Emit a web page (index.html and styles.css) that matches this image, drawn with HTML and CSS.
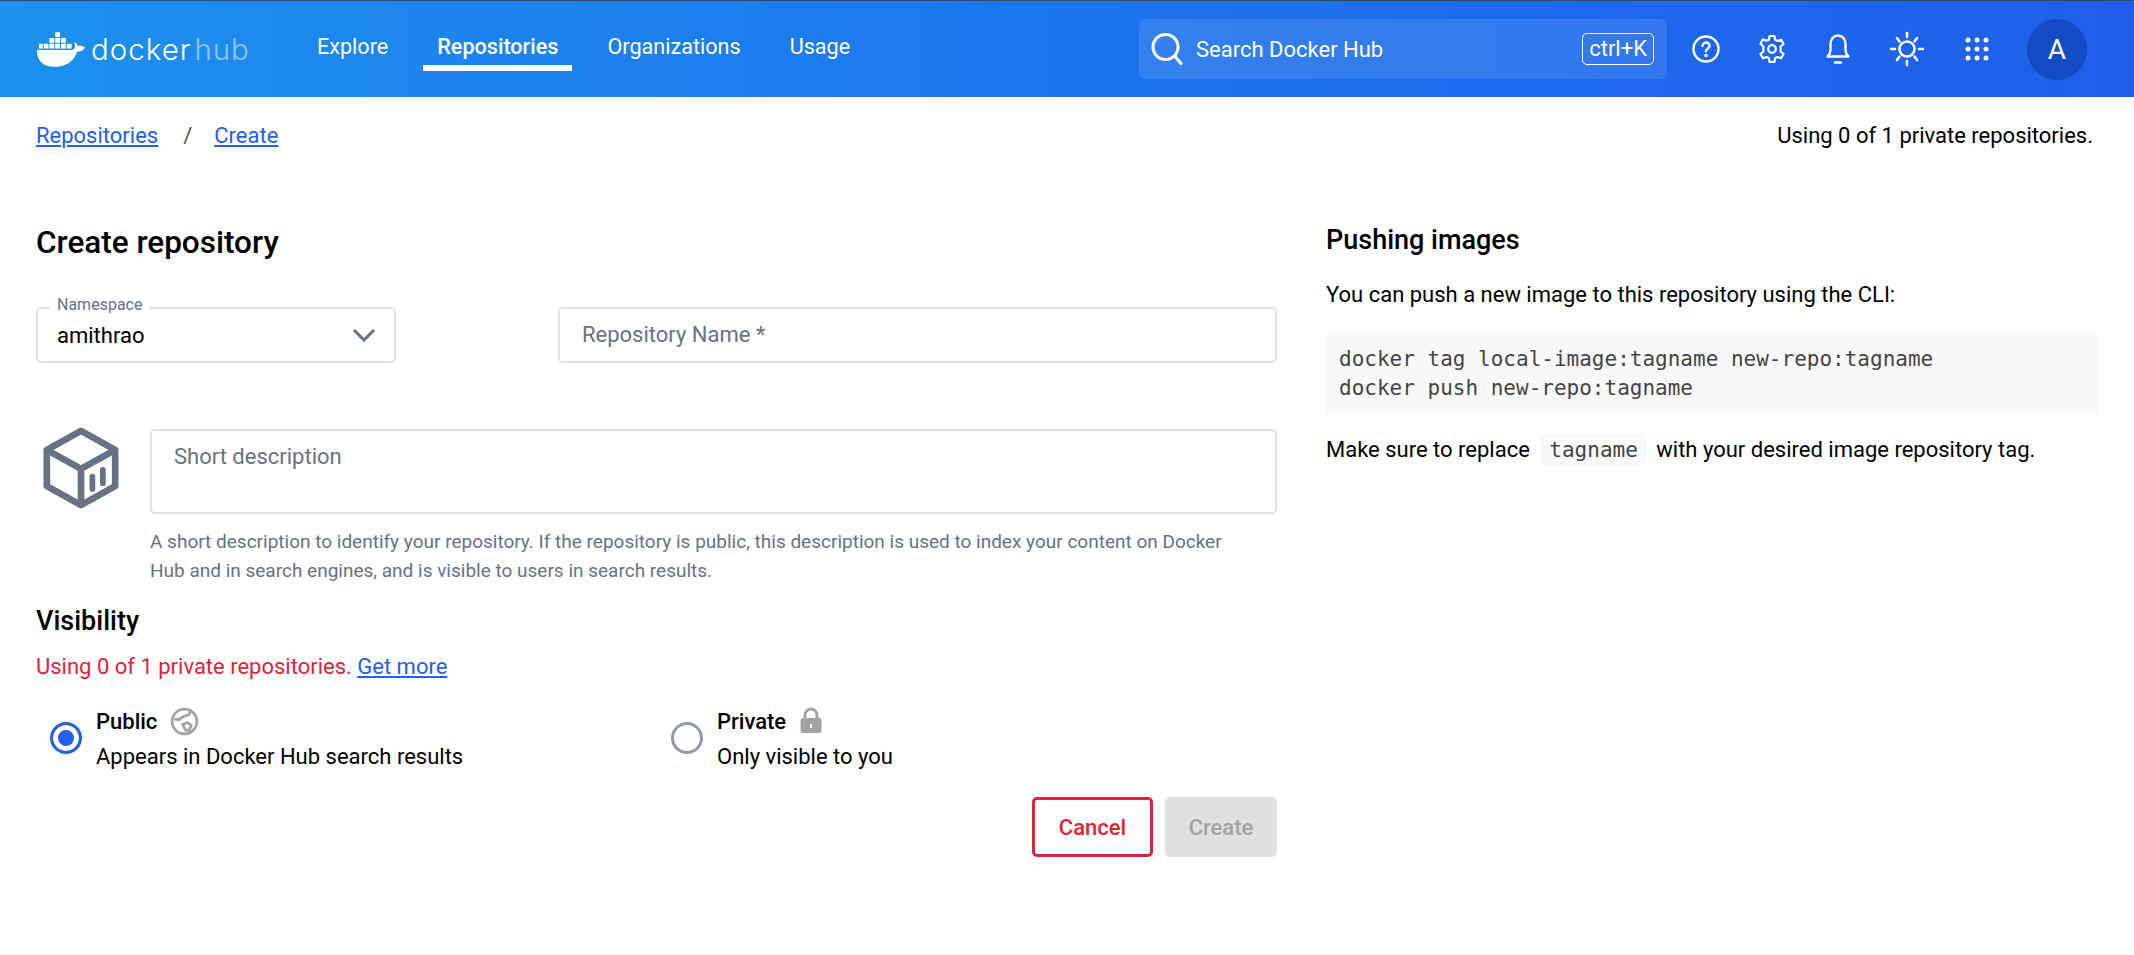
FILE: index.html

```html
<!DOCTYPE html>
<html lang="en">
<head>
  <meta charset="UTF-8">
  <title>Create repository | Docker Hub</title>
  <link rel="stylesheet" href="styles.css">
</head>
<body>
  <header class="topbar">
    <a class="logo">
      <svg class="whale" viewBox="0 0 52 38" width="50" height="37">
        <g fill="#fff">
          <rect x="20" y="1" width="5" height="5"/>
          <rect x="14" y="7" width="5" height="5"/><rect x="20" y="7" width="5" height="5"/><rect x="26" y="7" width="5" height="5"/>
          <rect x="8" y="13" width="5" height="5"/><rect x="14" y="13" width="5" height="5"/><rect x="20" y="13" width="5" height="5"/><rect x="26" y="13" width="5" height="5"/><rect x="32" y="13" width="5" height="5"/>
          <rect x="3" y="13" width="4" height="5"/>
          <path d="M1 19.5h35.5c2.2 0 3.6-1 4-3.4.2-1.800-.2-3.500-1-5 1.800.6 3.300 2 3.900 4.200 2.600-.7 5.500-.2 7.600 1.400-1.700 3.500-5 4.700-8.400 4.800C39.700 31 31 37 19 37 8 37 .6 31 1 19.500z"/>
        </g>
      </svg>
      <span class="wordmark">docker<span class="wordmark-hub">hub</span></span>
    </a>
    <nav class="mainnav">
      <a class="navlink">Explore</a>
      <a class="navlink active">Repositories</a>
      <a class="navlink">Organizations</a>
      <a class="navlink">Usage</a>
    </nav>
    <div class="searchbox">
      <svg class="search-icon" viewBox="0 0 34 34" width="34" height="34" fill="none" stroke="#fff" stroke-width="3" stroke-linecap="round">
        <circle cx="15.500" cy="15" r="12.500"/><path d="M25 24.500l6 7"/>
      </svg>
      <span class="search-text">Search Docker Hub</span>
      <span class="kbd">ctrl+K</span>
    </div>
    <div class="topicons">
      <svg viewBox="0 0 30 30" width="30" height="30" fill="none" stroke="#fff" stroke-width="2.400" stroke-linecap="round">
        <circle cx="15" cy="15" r="12.500"/>
        <path d="M11.500 12c0-2 1.600-3.500 3.500-3.500s3.500 1.400 3.500 3.200c0 2.800-3.500 2.800-3.500 5.600"/>
        <circle cx="15" cy="21.500" r=".6" fill="#fff"/>
      </svg>
      <svg viewBox="0 0 30 30" width="30" height="30" fill="none" stroke="#fff" stroke-width="2.200" stroke-linejoin="round">
        <circle cx="15" cy="15" r="3.800"/>
        <path d="M12.600 2h4.800l.7 3.700 2.400 1.300 3.600-1.300 2.400 4.300-2.900 2.500v5l2.900 2.500-2.400 4.300-3.600-1.300-2.400 1.300-.7 3.700h-4.800l-.7-3.700-2.400-1.300-3.600 1.300-2.400-4.300 2.900-2.500v-5L3.500 9.700l2.400-4.300 3.600 1.300L11.900 5.700z"/>
      </svg>
      <svg viewBox="0 0 30 32" width="30" height="32" fill="none" stroke="#fff" stroke-width="2.400" stroke-linecap="round" stroke-linejoin="round">
        <path d="M4.500 23.500c1.800-1.800 3-3.500 3-6.500v-6c0-4.500 3-8.500 7.500-8.500s7.500 4 7.500 8.500v6c0 3 1.200 4.700 3 6.500z"/>
        <path d="M12 29.500h6"/>
      </svg>
      <svg viewBox="0 0 36 36" width="36" height="36" fill="none" stroke="#fff" stroke-width="2.600" stroke-linecap="round">
        <circle cx="18" cy="18" r="7.500"/>
        <path d="M18 2v4M18 30v4M2 18h4M30 18h4M8 7l2.500 3.500M28 7l-2.500 3.500M8 29l2.500-3.500M28 29l-2.500-3.500"/>
      </svg>
      <svg class="grid-icon" viewBox="0 0 26 26" width="26" height="26" fill="#fff">
        <circle cx="4" cy="4" r="2.500"/><circle cx="13" cy="4" r="2.500"/><circle cx="22" cy="4" r="2.500"/>
        <circle cx="4" cy="13" r="2.500"/><circle cx="13" cy="13" r="2.500"/><circle cx="22" cy="13" r="2.500"/>
        <circle cx="4" cy="22" r="2.500"/><circle cx="13" cy="22" r="2.500"/><circle cx="22" cy="22" r="2.500"/>
      </svg>
    </div>
    <div class="avatar">A</div>
  </header>

  <div class="crumbbar">
    <div class="crumbs">
      <a class="link">Repositories</a>
      <span class="crumb-sep">/</span>
      <a class="link">Create</a>
    </div>
    <span>Using 0 of 1 private repositories.</span>
  </div>

  <main class="page">
    <section class="formcol">
      <h1 class="title">Create repository</h1>

      <div class="row-names">
        <div class="field field-ns">
          <span class="field-label">Namespace</span>
          <span class="field-value">amithrao</span>
          <svg viewBox="0 0 24 14" width="24" height="14" fill="none" stroke="#677285" stroke-width="3">
            <path d="M2 2l10 10L22 2"/>
          </svg>
        </div>
        <div class="field field-name"><span class="placeholder">Repository Name *</span></div>
      </div>

      <div class="row-desc">
        <svg class="repo-icon" viewBox="0 0 80 86" width="76" height="82" fill="none" stroke="#677285" stroke-width="7" stroke-linejoin="round">
          <path d="M40 4l36 20v38L40 82 4 62V24z"/>
          <path d="M4 24l36 20 36-20M40 44v38"/>
          <path d="M52 52v13M63 45v14" stroke-width="6" stroke-linecap="round"/>
        </svg>
        <div class="desc-main">
          <div class="field field-desc"><span class="placeholder">Short description</span></div>
          <p class="helptext">A short description to identify your repository. If the repository is public, this description is used to index your content on Docker Hub and in search engines, and is visible to users in search results.</p>
        </div>
      </div>

      <h2 class="subtitle">Visibility</h2>
      <p class="usage-warn">Using 0 of 1 private repositories. <a class="link">Get more</a></p>

      <div class="radios">
        <div class="radio-item radio-public">
          <span class="radio checked"></span>
          <div>
            <div class="radio-title">Public
              <svg viewBox="0 0 30 30" width="29" height="29" fill="none" stroke="#a3a3a3" stroke-width="2.800" stroke-linejoin="round">
                <circle cx="15" cy="15" r="12.800"/>
                <path d="M4.500 12.500l5 .5 4-3 6-2 2-4"/>
                <path d="M13 18l5-2 4 3-2 5h-4z"/>
              </svg>
            </div>
            <div class="radio-sub">Appears in Docker Hub search results</div>
          </div>
        </div>
        <div class="radio-item">
          <span class="radio"></span>
          <div>
            <div class="radio-title">Private
              <svg viewBox="0 0 24 28" width="24" height="28">
                <path d="M6 12V8a6 6 0 0 1 12 0v4" fill="none" stroke="#a3a3a3" stroke-width="3"/>
                <path fill="#a3a3a3" fill-rule="evenodd" d="M4 11h16a2.500 2.500 0 0 1 2.500 2.500v10A2.500 2.500 0 0 1 20 26H4a2.500 2.500 0 0 1-2.500-2.500v-10A2.500 2.500 0 0 1 4 11zm7 6v4h2v-4z"/>
              </svg>
            </div>
            <div class="radio-sub">Only visible to you</div>
          </div>
        </div>
      </div>

      <div class="actions">
        <button class="btn btn-cancel">Cancel</button>
        <button class="btn btn-create">Create</button>
      </div>
    </section>

    <aside class="helpcol">
      <h2 class="help-title">Pushing images</h2>
      <p class="help-line">You can push a new image to this repository using the CLI:</p>
      <pre class="codeblock">docker tag local-image:tagname new-repo:tagname
docker push new-repo:tagname</pre>
      <p class="help-line help-line-last">Make sure to replace <code class="inline-code">tagname</code> with your desired image repository tag.</p>
    </aside>
  </main>
</body>
</html>
```

FILE: styles.css

```css
* {
  box-sizing: border-box;
}
body {
  margin: 0;
  font-family: Roboto, "Liberation Sans", sans-serif;
  font-size: 22px;
  color: #000;
  background-color: #fff;
}
h1, h2, p {
  margin: 0;
}
.link {
  color: #2560e8;
  text-decoration: underline;
}

/* top bar */
.topbar {
  display: flex;
  align-items: center;
  height: 97px;
  padding-left: 36px;
  border-top: 1px solid #3a4a5e;
  background: linear-gradient(90deg, #1d91ee 0%, #1c72ee 55%, #1f5eea 100%);
  color: #fff;
}
.logo {
  display: flex;
  align-items: center;
  width: 281px;
}
.whale {
  margin-right: 5px;
}
.wordmark {
  font-family: Inter, sans-serif;
  font-weight: 300;
  font-size: 29.5px;
  letter-spacing: 1px;
}
.wordmark-hub {
  margin-left: 3px;
  opacity: 0.5;
}
.mainnav {
  display: flex;
  align-self: flex-start;
  gap: 21px;
  width: 836px;
  margin-left: -14px;
}
.navlink {
  display: flex;
  align-items: center;
  height: 70px;
  padding: 26px 14px 0;
  font-size: 21.6px;
  border-bottom: 6px solid transparent;
}
.navlink.active {
  font-weight: 500;
  border-bottom-color: #fff;
}
.searchbox {
  display: flex;
  align-items: center;
  width: 528px;
  height: 60px;
  padding: 0 13px 0 11px;
  border-radius: 6px;
  background-color: rgba(255, 255, 255, 0.1);
}
.search-text {
  flex: 1;
  margin-left: 12px;
}
.kbd {
  padding: 4px 6px;
  line-height: 22px;
  border: 1px solid #fff;
  border-radius: 5px;
}
.topicons {
  display: flex;
  align-items: center;
  gap: 36px;
  margin-left: 24px;
}
.grid-icon {
  margin-left: 3px;
}
.avatar {
  display: flex;
  align-items: center;
  justify-content: center;
  width: 60px;
  height: 61px;
  margin-left: 37px;
  border-radius: 50%;
  background-color: #124bc4;
  font-size: 28px;
}

/* breadcrumb */
.crumbbar {
  display: flex;
  justify-content: space-between;
  align-items: center;
  padding: 27px 41px 0 36px;
  line-height: 24px;
}
.crumbs {
  display: flex;
  gap: 25px;
}
.crumb-sep {
  margin-right: -3px;
  color: #555;
}

/* layout */
.page {
  display: flex;
  gap: 49px;
  padding: 77px 36px 0;
}
.formcol {
  width: 1241px;
}
.helpcol {
  width: 772px;
}

/* form */
.title {
  font-size: 31.5px;
  line-height: 36px;
  font-weight: 500;
}
.row-names {
  display: flex;
  gap: 162px;
  margin-top: 46px;
}
.field {
  position: relative;
  display: flex;
  align-items: center;
  border: 2px solid #e1e2e6;
  border-radius: 5px;
}
.field-ns {
  justify-content: space-between;
  width: 360px;
  height: 56px;
  padding: 0 18px 0 19px;
}
.field-name {
  flex: 1;
  height: 56px;
  padding: 0 22px 2px;
}
.field-label {
  position: absolute;
  top: -13px;
  left: 12px;
  padding: 0 7px;
  font-size: 16px;
  line-height: 18px;
  color: #677285;
  background-color: #fff;
}
.placeholder {
  color: #677285;
}
.row-desc {
  display: flex;
  gap: 31px;
  margin-top: 66px;
}
.repo-icon {
  flex: none;
  margin-left: 7px;
  margin-top: -2px;
}
.desc-main {
  flex: 1;
}
.field-desc {
  align-items: flex-start;
  height: 85px;
  padding: 13px 22px;
}
.helptext {
  margin-top: 13px;
  font-size: 19px;
  line-height: 29px;
  color: #677285;
  max-width: 1090px;
}
.subtitle {
  margin-top: 20px;
  font-size: 27px;
  line-height: 32px;
  font-weight: 500;
}
.usage-warn {
  margin-top: 16px;
  line-height: 28px;
  color: #dc2438;
}
.radios {
  display: flex;
  margin-top: 25px;
  padding-left: 14px;
}
.radio-item {
  display: flex;
  align-items: center;
  gap: 14px;
}
.radio-public {
  width: 621px;
}
.radio {
  flex: none;
  width: 32px;
  height: 32px;
  border: 3px solid #8f99ab;
  border-radius: 50%;
  background-color: #fff;
}
.radio.checked {
  border-color: #2560e8;
  background-color: #2560e8;
  box-shadow: inset 0 0 0 5px #fff;
}
.radio-title {
  display: flex;
  align-items: center;
  gap: 13px;
  height: 30px;
  font-weight: 500;
}
.radio-sub {
  margin-top: 8px;
  line-height: 26px;
}
.actions {
  display: flex;
  justify-content: flex-end;
  gap: 12px;
  margin-top: 27px;
}
.btn {
  height: 60px;
  font-family: inherit;
  font-size: 22px;
  font-weight: 500;
  border-radius: 5px;
}
.btn-cancel {
  width: 121px;
  color: #dc2438;
  background-color: #fff;
  border: 3px solid #dc2438;
}
.btn-create {
  width: 112px;
  color: #a3a3a3;
  background-color: #e0e0e0;
  border: none;
}

/* help column */
.help-title {
  margin-top: -1px;
  font-size: 27px;
  line-height: 32px;
  font-weight: 500;
}
.help-line {
  margin-top: 25px;
  line-height: 28px;
}
.help-line-last {
  margin-top: 20px;
}
.codeblock {
  margin: 22px 0 0;
  padding: 14px 13px 12px;
  font-family: "DejaVu Sans Mono", "Liberation Mono", monospace;
  font-size: 21px;
  line-height: 29px;
  color: #444;
  background-color: #f9f9f9;
  border-radius: 5px;
}
.inline-code {
  display: inline-block;
  margin: 0 5px 0 6px;
  padding: 0 7px;
  font-family: "DejaVu Sans Mono", "Liberation Mono", monospace;
  font-size: 21px;
  line-height: 28px;
  color: #444;
  background-color: #f9f9f9;
  border: 1px solid #f4f4f4;
  border-radius: 5px;
}
```
